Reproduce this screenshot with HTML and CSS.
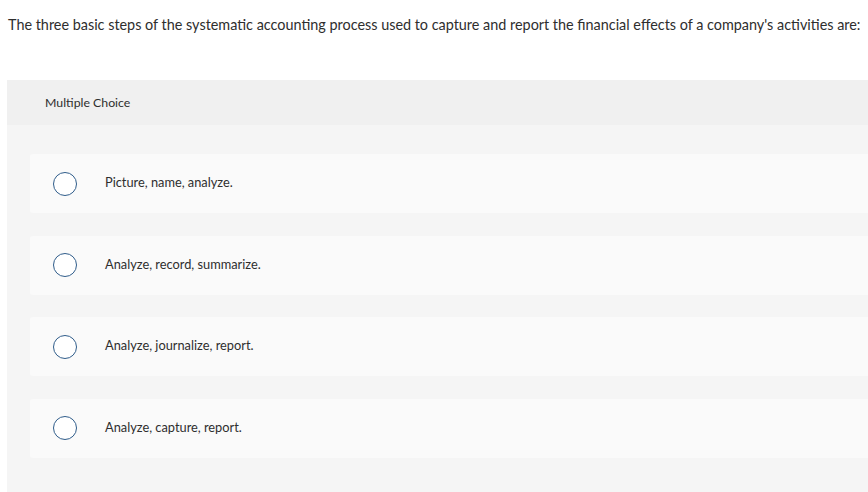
FILE: index.html
```html
<!DOCTYPE html>
<html>
<head>
<meta charset="utf-8">
<link rel="stylesheet" href="styles.css">
</head>
<body>
<p class="question">The three basic steps of the systematic accounting process used to capture and report the financial effects of a company's activities are:</p>
<div class="panel">
  <div class="panel-header">Multiple Choice</div>
  <div class="options">
    <div class="option"><span class="radio"></span><span class="label">Picture, name, analyze.</span></div>
    <div class="option"><span class="radio"></span><span class="label">Analyze, record, summarize.</span></div>
    <div class="option"><span class="radio"></span><span class="label">Analyze, journalize, report.</span></div>
    <div class="option"><span class="radio"></span><span class="label">Analyze, capture, report.</span></div>
  </div>
</div>
</body>
</html>
```
FILE: styles.css
```css
html, body {
  margin: 0;
  padding: 0;
  background: #ffffff;
  overflow: hidden;
}
body {
  font-family: Lato, "Liberation Sans", sans-serif;
  color: #2e2e2e;
  width: 868px;
  height: 492px;
}
.question {
  margin: 0;
  padding: 16px 0 0 8px;
  font-size: 14.4px;
  line-height: 18px;
  height: 80px;
  box-sizing: border-box;
  white-space: nowrap;
}
.panel {
  margin-left: 7px;
  background: #f5f5f5;
  height: 412px;
}
.panel-header {
  background: #f0f0f0;
  height: 45px;
  box-sizing: border-box;
  padding-left: 38px;
  display: flex;
  align-items: center;
  font-size: 12.3px;
}
.options {
  padding: 29px 0 0 23px;
  display: flex;
  flex-direction: column;
  gap: 22.67px;
}
.option {
  background: #fafafa;
  height: 59px;
  border-radius: 3px 0 0 3px;
  display: flex;
  align-items: center;
  padding-left: 23px;
  font-size: 12.8px;
}
.radio {
  width: 22px;
  height: 22px;
  border: 1.5px solid #2f5c8a;
  border-radius: 50%;
  background: #ffffff;
  flex: none;
}
.label {
  margin-left: 28px;
  padding-bottom: 3px;
}
```
